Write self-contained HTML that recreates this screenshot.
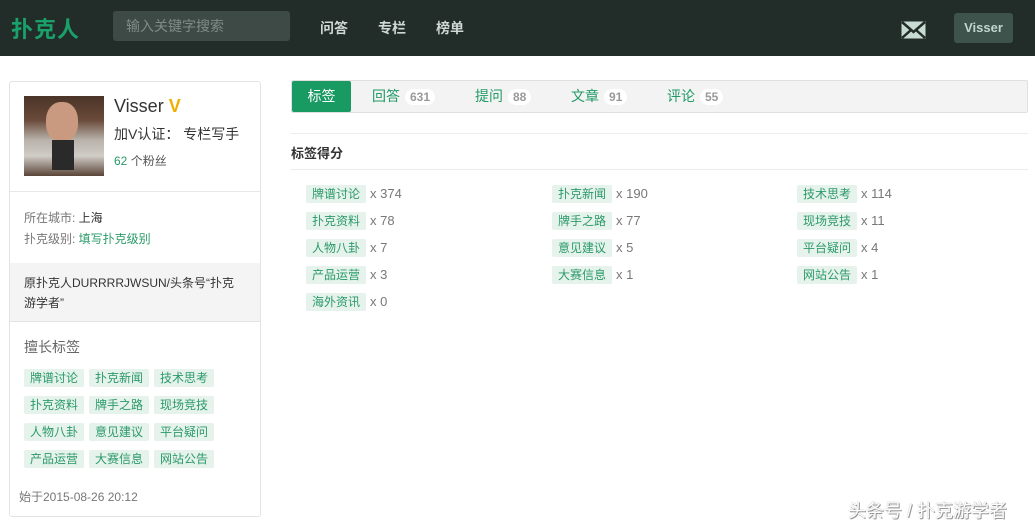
<!DOCTYPE html>
<html><head><meta charset="utf-8"><style>
*{margin:0;padding:0;box-sizing:border-box}
body{width:1035px;height:525px;background:#fff;font-family:"Liberation Sans","Noto Sans CJK SC",sans-serif;font-size:12px;color:#333;position:relative;overflow:hidden}
.a{position:absolute;white-space:nowrap}
.hd{position:absolute;left:0;top:0;width:1035px;height:56px;background:#222c29}
.tag{position:absolute;height:18px;line-height:18px;padding:0 6px;background:#e6f2ec;color:#2a9a68;font-size:12px;border-radius:2px;white-space:nowrap}
.x{position:absolute;color:#777;font-size:13px;line-height:18px}
.tab{position:absolute;top:81px;height:30px;line-height:30px;color:#1f9a66;font-size:14px}
.n{display:inline-block;background:#fff;color:#999;border-radius:9px;font-size:12px;line-height:16px;padding:0 5px;margin-left:5px;font-weight:bold}
</style></head><body>
<div class="hd"></div>
<div class="a" style="left:11px;top:12px;font-size:22px;font-weight:bold;color:#1aa06a;letter-spacing:1px">扑克人</div>
<div class="a" style="left:113px;top:11px;width:177px;height:30px;background:#3d4a46;border-radius:3px;color:#7f8b87;font-size:14px;line-height:30px;padding-left:13px">输入关键字搜索</div>
<div class="a" style="left:320px;top:18px;font-size:14px;font-weight:bold;color:#cfd8d5">问答</div>
<div class="a" style="left:378px;top:18px;font-size:14px;font-weight:bold;color:#cfd8d5">专栏</div>
<div class="a" style="left:436px;top:18px;font-size:14px;font-weight:bold;color:#cfd8d5">榜单</div>
<svg class="a" style="left:901px;top:21px" width="25" height="18" viewBox="0 0 25 18"><rect x="0.5" y="0.5" width="24" height="17" fill="#c9dcd3"/><path d="M1 1 L12.5 11 L24 1 M1 17 L10 9 M24 17 L15 9" stroke="#222c29" stroke-width="2.5" fill="none"/></svg>
<div class="a" style="left:954px;top:13px;width:59px;height:30px;background:#3d534c;border-radius:3px;color:#c2d4cd;font-weight:bold;font-size:13px;line-height:30px;text-align:center">Visser</div>

<div class="a" style="left:9px;top:81px;width:252px;height:436px;border:1px solid #e3e3e3;border-radius:3px"></div>
<div class="a" style="left:24px;top:96px;width:80px;height:80px;background:linear-gradient(180deg,#4a3428 0%,#6a4a3a 30%,#b8b2aa 55%,#d0ccc6 75%,#5a4438 100%)"></div>
<div class="a" style="left:46px;top:102px;width:32px;height:40px;border-radius:45%;background:#c99a80"></div>
<div class="a" style="left:52px;top:140px;width:22px;height:30px;background:#2a2a2a"></div>
<div class="a" style="left:114px;top:96px;font-size:18px;color:#333">Visser <span style="color:#f0b000;font-weight:bold">V</span></div>
<div class="a" style="left:114px;top:124px;font-size:14px;color:#333">加V认证： 专栏写手</div>
<div class="a" style="left:114px;top:152px;font-size:12px;color:#555"><span style="color:#2a9a68">62</span> 个粉丝</div>
<div class="a" style="left:10px;top:191px;width:250px;height:1px;background:#e8e8e8"></div>
<div class="a" style="left:24px;top:209px;color:#777">所在城市: <span style="color:#333">上海</span></div>
<div class="a" style="left:24px;top:230px;color:#777">扑克级别: <span style="color:#2a9a68">填写扑克级别</span></div>
<div class="a" style="left:10px;top:263px;width:250px;height:59px;background:#f4f4f4;border-bottom:1px solid #e3e3e3"></div>
<div class="a" style="left:24px;top:273px;color:#333;line-height:20px">原扑克人DURRRRJWSUN/头条号“扑克<br>游学者”</div>
<div class="a" style="left:24px;top:337px;font-size:14px;color:#666">擅长标签</div>
<div class="tag" style="left:24px;top:369px">牌谱讨论</div><div class="tag" style="left:89px;top:369px">扑克新闻</div><div class="tag" style="left:154px;top:369px">技术思考</div>
<div class="tag" style="left:24px;top:396px">扑克资料</div><div class="tag" style="left:89px;top:396px">牌手之路</div><div class="tag" style="left:154px;top:396px">现场竞技</div>
<div class="tag" style="left:24px;top:423px">人物八卦</div><div class="tag" style="left:89px;top:423px">意见建议</div><div class="tag" style="left:154px;top:423px">平台疑问</div>
<div class="tag" style="left:24px;top:450px">产品运营</div><div class="tag" style="left:89px;top:450px">大赛信息</div><div class="tag" style="left:154px;top:450px">网站公告</div>
<div class="a" style="left:19px;top:488px;color:#777">始于2015-08-26 20:12</div>

<div class="a" style="left:291px;top:80px;width:737px;height:33px;background:#f3f3f3;border:1px solid #e0e0e0;border-radius:2px"></div>
<div class="a" style="left:292px;top:81px;width:59px;height:31px;background:#1a9a63;border-radius:2px;color:#fff;font-size:14px;line-height:31px;text-align:center">标签</div>
<div class="tab" style="left:372px">回答<span class="n">631</span></div>
<div class="tab" style="left:475px">提问<span class="n">88</span></div>
<div class="tab" style="left:571px">文章<span class="n">91</span></div>
<div class="tab" style="left:667px">评论<span class="n">55</span></div>
<div class="a" style="left:291px;top:133px;width:737px;height:1px;background:#ececec"></div>
<div class="a" style="left:291px;top:143px;font-size:13px;font-weight:bold;color:#333">标签得分</div>
<div class="a" style="left:291px;top:169px;width:737px;height:1px;background:#ececec"></div>

<div class="tag" style="left:306px;top:185px">牌谱讨论</div><div class="x" style="left:370px;top:185px">x 374</div>
<div class="tag" style="left:552px;top:185px">扑克新闻</div><div class="x" style="left:616px;top:185px">x 190</div>
<div class="tag" style="left:797px;top:185px">技术思考</div><div class="x" style="left:861px;top:185px">x 114</div>
<div class="tag" style="left:306px;top:212px">扑克资料</div><div class="x" style="left:370px;top:212px">x 78</div>
<div class="tag" style="left:552px;top:212px">牌手之路</div><div class="x" style="left:616px;top:212px">x 77</div>
<div class="tag" style="left:797px;top:212px">现场竞技</div><div class="x" style="left:861px;top:212px">x 11</div>
<div class="tag" style="left:306px;top:239px">人物八卦</div><div class="x" style="left:370px;top:239px">x 7</div>
<div class="tag" style="left:552px;top:239px">意见建议</div><div class="x" style="left:616px;top:239px">x 5</div>
<div class="tag" style="left:797px;top:239px">平台疑问</div><div class="x" style="left:861px;top:239px">x 4</div>
<div class="tag" style="left:306px;top:266px">产品运营</div><div class="x" style="left:370px;top:266px">x 3</div>
<div class="tag" style="left:552px;top:266px">大赛信息</div><div class="x" style="left:616px;top:266px">x 1</div>
<div class="tag" style="left:797px;top:266px">网站公告</div><div class="x" style="left:861px;top:266px">x 1</div>
<div class="tag" style="left:306px;top:293px">海外资讯</div><div class="x" style="left:370px;top:293px">x 0</div>

<div class="a" style="left:848px;top:497px;font-size:18px;color:#fff;text-shadow:0 0 1px #888,1px 1px 0 #999">头条号 / 扑克游学者</div>
</body></html>
